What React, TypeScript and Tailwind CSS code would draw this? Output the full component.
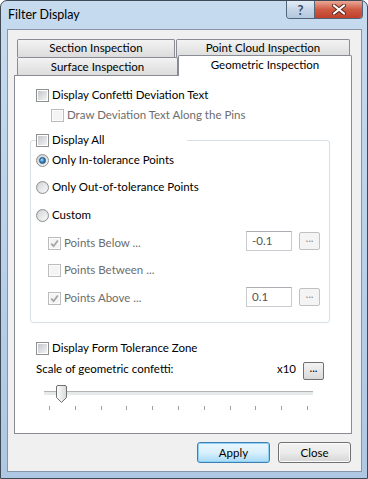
import React from 'react';

const FONT = "font-['Lato',_'Liberation_Sans',sans-serif]";

function CheckMark() {
  return (
    <svg width="9" height="9" viewBox="0 0 9 9">
      <path d="M1.2 4.6 L3.6 7.2 L7.8 1.4" fill="none" stroke="#a3a3a3" strokeWidth="1.7" />
    </svg>
  );
}

function CheckBox({ checked = false, disabled = false }: { checked?: boolean; disabled?: boolean }) {
  return (
    <span
      className={`flex h-[13px] w-[13px] shrink-0 items-center justify-center border ${
        disabled ? 'border-[#bcbcbc] bg-[#fbfbfb]' : 'border-[#8e8f8f] bg-white'
      }`}
    >
      <span
        className={`flex h-[9px] w-[9px] items-center justify-center ${
          disabled ? 'bg-[#f4f4f4]' : 'bg-gradient-to-br from-[#c3c7cc] to-[#f3f3f3]'
        }`}
      >
        {checked && <CheckMark />}
      </span>
    </span>
  );
}

function Radio({ checked = false }: { checked?: boolean }) {
  return (
    <span className="flex h-[13px] w-[13px] shrink-0 items-center justify-center rounded-full border border-[#8e8f8f] bg-gradient-to-br from-[#c9ccd1] to-[#f6f6f6]">
      {checked ? (
        <span className="h-[7px] w-[7px] rounded-full border border-[#1b4f78] bg-[radial-gradient(circle_at_35%_35%,#a9dcf7_0%,#3c8ed0_45%,#12497a_100%)]" />
      ) : (
        <span className="h-[9px] w-[9px] rounded-full bg-gradient-to-br from-[#d4d7db] to-[#f8f8f8]" />
      )}
    </span>
  );
}

function Row({
  children,
  className = '',
}: {
  children: React.ReactNode;
  className?: string;
}) {
  return <div className={`flex h-[20px] items-center ${className}`}>{children}</div>;
}

function DotsButton({ disabled = false }: { disabled?: boolean }) {
  return (
    <button
      className={`flex h-[18px] w-[21px] items-start justify-center rounded-[2px] border bg-gradient-to-b leading-[10px] ${
        disabled
          ? 'border-[#bfc1c3] from-[#f4f4f4] to-[#f4f4f4] text-[#8d8d8d]'
          : 'border-[#707070] from-[#f3f3f3] to-[#d9d9d9] text-black'
      }`}
    >
      ...
    </button>
  );
}

function ValueBox({ value }: { value: string }) {
  return (
    <div className="flex h-[20px] w-[46px] items-center border border-[#c9ccd1] border-t-[#abadb3] bg-white pl-[5px] text-[#555]">
      {value}
    </div>
  );
}

function Slider() {
  const ticks = Array.from({ length: 11 });
  return (
    <div className="ml-[29px] mt-[6px] w-[269px]">
      <div className="relative h-[20px]">
        <div className="absolute left-0 right-0 top-[6px] h-[4px] border-t border-[#b4b4b4] bg-[#e7eaea]" />
        <svg className="absolute left-[12px] top-0" width="11" height="18" viewBox="0 0 11 18">
          <defs>
            <linearGradient id="thumb" x1="0" y1="0" x2="1" y2="0">
              <stop offset="0" stopColor="#fdfdfd" />
              <stop offset="1" stopColor="#d8d8d8" />
            </linearGradient>
          </defs>
          <path d="M2 0.5 H9 Q10.5 0.5 10.5 2 V12.5 L5.5 17.5 L0.5 12.5 V2 Q0.5 0.5 2 0.5 Z" fill="url(#thumb)" stroke="#707070" />
        </svg>
      </div>
      <div className="ml-[5px] mt-[1px] flex w-[259px] justify-between">
        {ticks.map((_, i) => (
          <span key={i} className="h-[4px] w-px bg-[#a0a0a0]" />
        ))}
      </div>
    </div>
  );
}

export default function App() {
  return (
    <div className={`${FONT} h-[479px] w-[368px] rounded-t-[7px] border border-[#3f4a56] bg-gradient-to-b from-[#c7dbef] via-[#b9d1ea] to-[#aec8e3] text-[11.5px] leading-[16px] text-black`}>
      {/* Title bar */}
      <div className="flex h-[28px] items-start justify-between">
        <span className="pl-[7px] pt-[6px] text-[12.5px]">Filter Display</span>
        <div className="mr-[4px] flex h-[18px] overflow-hidden rounded-b-[4px] border border-t-0 border-[#53657a]">
          <div className="flex w-[28px] items-center justify-center border-r border-[#53657a] bg-gradient-to-b from-[#e3ecf6] via-[#c6d6e8] to-[#b3c7dd] text-[13px] font-bold text-[#3b4a5c]">
            ?
          </div>
          <div className="flex w-[47px] items-center justify-center bg-gradient-to-b from-[#e9a897] via-[#cf5a43] to-[#c0402a]">
            <svg width="14" height="11" viewBox="0 0 14 11">
              <path d="M2 1.5 L12 9.5 M12 1.5 L2 9.5" stroke="#5b2a22" strokeWidth="4" strokeLinecap="round" />
              <path d="M2 1.5 L12 9.5 M12 1.5 L2 9.5" stroke="#ffffff" strokeWidth="2.2" strokeLinecap="round" />
            </svg>
          </div>
        </div>
      </div>

      {/* Client area */}
      <div className="ml-[6px] h-[443px] w-[355px] border border-[#8795a6] bg-[#f0f0f0]">
        {/* Tabs */}
        <div className="mt-[9px] flex h-[18px]">
          <div className="ml-[9px] flex w-[158px] items-center justify-center rounded-t-[2px] border border-b-0 border-[#898c95] bg-gradient-to-b from-[#f3f3f3] to-[#dcdcdc] pb-px">
            Section Inspection
          </div>
          <div className="ml-[1px] flex w-[174px] items-center justify-center rounded-t-[2px] border border-b-0 border-[#898c95] bg-gradient-to-b from-[#f3f3f3] to-[#dcdcdc] pb-px">
            Point Cloud Inspection
          </div>
        </div>
        <div className="relative z-10 flex h-[18px] items-end">
          <div className="ml-[9px] flex h-[18px] w-[161px] items-center justify-center rounded-t-[2px] border border-b-0 border-[#898c95] bg-gradient-to-b from-[#f3f3f3] to-[#dcdcdc]">
            Surface Inspection
          </div>
          <div className="mb-[-1px] flex h-[21px] w-[174px] items-start justify-center rounded-t-[2px] border border-b-0 border-[#898c95] bg-white pt-[1px]">
            Geometric Inspection
          </div>
        </div>

        {/* Tab page */}
        <div className="ml-[6px] h-[359px] w-[338px] border border-[#898c95] bg-white">
          <Row className="ml-[21px] mt-[9px] gap-[3px]">
            <CheckBox />
            <span>Display Confetti Deviation Text</span>
          </Row>
          <Row className="ml-[36px] gap-[3px] text-[#6d6d6d]">
            <CheckBox disabled />
            <span>Draw Deviation Text Along the Pins</span>
          </Row>

          <fieldset className="ml-[15px] mt-[5px] w-[300px] rounded-[3px] border border-[#d5dfe5] pb-[14px] pl-[5px] pr-[9px]">
            <legend className="flex h-[20px] w-[151px] items-center gap-[3px]">
              <CheckBox />
              <span>Display All</span>
            </legend>
            <Row className="gap-[3px]">
              <Radio checked />
              <span>Only In-tolerance Points</span>
            </Row>
            <Row className="mt-[7px] gap-[3px]">
              <Radio />
              <span>Only Out-of-tolerance Points</span>
            </Row>
            <Row className="mt-[8px] gap-[3px]">
              <Radio />
              <span>Custom</span>
            </Row>
            <Row className="mt-[8px] gap-[3px] pl-[12px] text-[#6d6d6d]">
              <CheckBox checked disabled />
              <span>Points Below ...</span>
              <span className="ml-auto mt-[-4px] flex items-center gap-[7px]">
                <ValueBox value="-0.1" />
                <DotsButton disabled />
              </span>
            </Row>
            <Row className="mt-[7px] gap-[3px] pl-[12px] text-[#6d6d6d]">
              <CheckBox disabled />
              <span>Points Between ...</span>
            </Row>
            <Row className="mt-[8px] gap-[3px] pl-[12px] text-[#6d6d6d]">
              <CheckBox checked disabled />
              <span>Points Above ...</span>
              <span className="ml-auto mt-[-2px] flex items-center gap-[7px]">
                <ValueBox value="0.1" />
                <DotsButton disabled />
              </span>
            </Row>
          </fieldset>

          <Row className="ml-[21px] mt-[15px] gap-[3px]">
            <CheckBox />
            <span>Display Form Tolerance Zone</span>
          </Row>
          <Row className="ml-[21px] mt-[1px] w-[288px]">
            <span>Scale of geometric confetti:</span>
            <span className="ml-auto">x10</span>
            <span className="ml-[7px] mt-[3px]">
              <DotsButton />
            </span>
          </Row>
          <Slider />
        </div>

        {/* Buttons */}
        <div className="mt-[8px] flex justify-end gap-[8px] pr-[10px]">
          <button className="flex h-[21px] w-[73px] items-center justify-center rounded-[3px] border border-[#3c7fb1] bg-gradient-to-b from-[#eaf6fd] via-[#d9f0fc] to-[#a7d9f5] shadow-[inset_0_0_0_1px_#8fd1f5]">
            Apply
          </button>
          <button className="flex h-[21px] w-[73px] items-center justify-center rounded-[3px] border border-[#707070] bg-gradient-to-b from-[#f2f2f2] via-[#ebebeb] to-[#d5d5d5] shadow-[inset_0_0_0_1px_#fbfbfb]">
            Close
          </button>
        </div>
      </div>
    </div>
  );
}
